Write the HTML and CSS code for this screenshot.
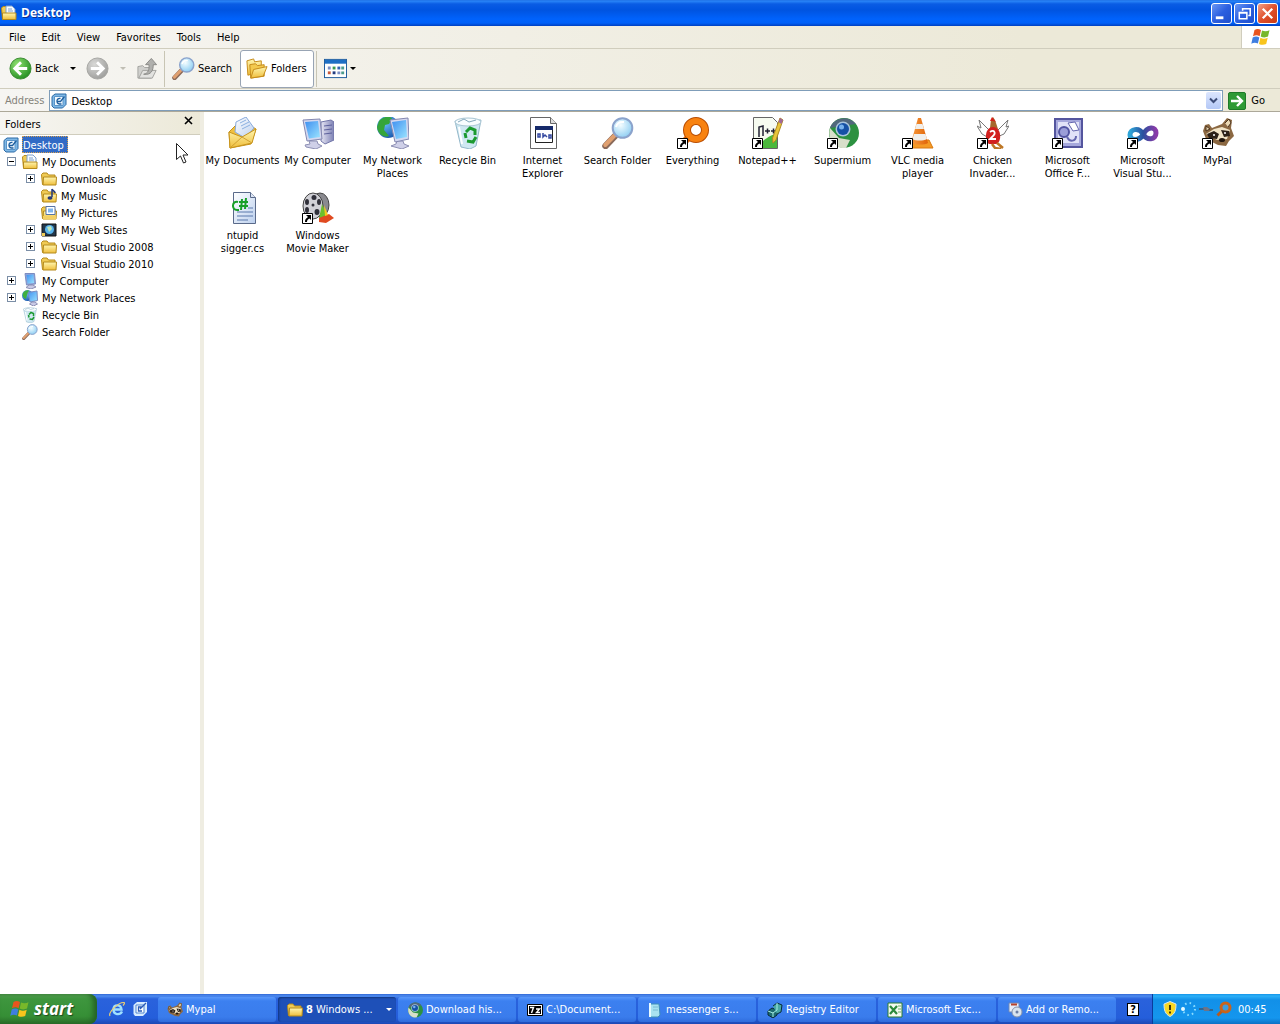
FILE: index.html
```html
<!DOCTYPE html>
<html lang="en">
<head>
    <meta charset="UTF-8">
    <meta name="viewport" content="width=device-width, initial-scale=1.0">
    <title>Desktop</title>
    <link rel="stylesheet" href="styles.css">
</head>
<body>
    <!-- shared icons -->
    <svg class="sprite" aria-hidden="true">
        <defs>
            <linearGradient id="g-folder" x1="0" y1="0" x2="0" y2="1"><stop offset="0" stop-color="#fff6b0"/><stop offset="1" stop-color="#efbe3c"/></linearGradient>
            <linearGradient id="g-screen" x1="0" y1="0" x2="1" y2="1"><stop offset="0" stop-color="#3f8ff0"/><stop offset="1" stop-color="#9be4ff"/></linearGradient>
            <linearGradient id="g-case" x1="0" y1="0" x2="1" y2="0"><stop offset="0" stop-color="#e6e6f4"/><stop offset="1" stop-color="#7c80b4"/></linearGradient>
            <linearGradient id="g-paper" x1="0" y1="0" x2="1" y2="1"><stop offset="0" stop-color="#ffffff"/><stop offset="1" stop-color="#bcd0ee"/></linearGradient>
            <linearGradient id="g-loop" x1="0" y1="0" x2="1" y2="0"><stop offset="0" stop-color="#2fa5d8"/><stop offset=".5" stop-color="#2b4f9e"/><stop offset="1" stop-color="#8a3aa8"/></linearGradient>
            <linearGradient id="g-cone" x1="0" y1="0" x2="1" y2="0"><stop offset="0" stop-color="#f89a3c"/><stop offset="1" stop-color="#e06408"/></linearGradient>
            <radialGradient id="g-green" cx=".35" cy=".3" r=".8"><stop offset="0" stop-color="#8fe070"/><stop offset="1" stop-color="#1d8a1d"/></radialGradient>
            <radialGradient id="g-gray" cx=".35" cy=".3" r=".8"><stop offset="0" stop-color="#d8d8d6"/><stop offset="1" stop-color="#9a9a98"/></radialGradient>
            <radialGradient id="g-lens" cx=".4" cy=".35" r=".7"><stop offset="0" stop-color="#f4fdff"/><stop offset="1" stop-color="#8accf2"/></radialGradient>
            <radialGradient id="g-globe" cx=".35" cy=".3" r=".8"><stop offset="0" stop-color="#6bc4ff"/><stop offset="1" stop-color="#1450a8"/></radialGradient>
        </defs>

        <symbol id="flag" viewBox="0 0 20 18">
            <path d="M3.500 2C6 .3 8 .8 10 2L8.600 8.200C6.500 7 4.500 7 2 8.300z" fill="#e8541e"/>
            <path d="M11 2.500C13.500 3.600 16 3.500 18.500 2.300L17 8.600C14.500 9.800 12 9.600 9.700 8.500z" fill="#78b82a"/>
            <path d="M1.700 9.500C4 8.200 6.200 8.200 8.300 9.400L6.900 15.600C4.800 14.500 2.700 14.500.3 15.700z" fill="#3f7ee0"/>
            <path d="M9.400 9.800C11.700 11 14.200 11 16.700 9.800L15.200 16C12.700 17.200 10.300 17 8 15.900z" fill="#f8c41c"/>
        </symbol>
        <symbol id="arrow-left" viewBox="0 0 24 24">
            <circle cx="12" cy="12" r="11" fill="url(#g-green)" stroke="#3a8a30"/>
            <path d="M12.500 5.500 6 12l6.500 6.500M6.500 12H19" fill="none" stroke="#fff" stroke-width="3"/>
        </symbol>
        <symbol id="arrow-right" viewBox="0 0 24 24">
            <circle cx="12" cy="12" r="11" fill="url(#g-gray)" stroke="#a5a5a2"/>
            <path d="M11.500 5.500 18 12l-6.500 6.500M17.500 12H5" fill="none" stroke="#fff" stroke-width="3"/>
        </symbol>
        <symbol id="folder-up" viewBox="0 0 24 24">
            <path d="M2 10l5-1 2 2h7v11H2z" fill="#d0d0cd" stroke="#a2a29f"/>
            <path d="M3 22l4-8h14l-4 8z" fill="#e2e2df" stroke="#a2a29f"/>
            <path d="M8 18c5-1 6-5 5.500-10H10l6-6.500L21.500 8H18c0 6-2 11-10 10z" fill="#b0b0ad" stroke="#8a8a87"/>
        </symbol>
        <symbol id="search" viewBox="0 0 32 32">
            <path d="M13 19 3.500 29" stroke="#8a6a5a" stroke-width="6.500" stroke-linecap="round"/>
            <path d="M12.500 18.500 3.300 28" stroke="#e0a070" stroke-width="4" stroke-linecap="round"/>
            <circle cx="20.500" cy="11" r="9.800" fill="url(#g-lens)" stroke="#8ba3cc" stroke-width="2"/>
            <path d="M14 10c1-4 4-5.500 8-5" fill="none" stroke="#fff" stroke-width="2"/>
        </symbol>
        <symbol id="folders" viewBox="0 0 24 24">
            <path d="M2 4l7-2 1 3 7-1v11L3 19z" fill="url(#g-folder)" stroke="#c48a18"/>
            <path d="M5 8l6-1 2 2 7-1v12L6 22z" fill="#f3c94e" stroke="#c48a18"/>
            <path d="M6 22l3-9 14-3-4 10z" fill="url(#g-folder)" stroke="#c48a18"/>
        </symbol>
        <symbol id="views" viewBox="0 0 24 20">
            <rect x=".5" y=".5" width="23" height="19" fill="#fff" stroke="#1c5a9c"/>
            <path d="M1 1h22v4H1z" fill="#1e6fc4"/>
            <path d="M4 8h3v3H4zM14 13h3v3h-3z" fill="#7a8ec4"/><path d="M9 8h3v3H9z" fill="#3a9a50"/>
            <path d="M14 8h3v3h-3z" fill="#2f62b0"/><path d="M4 13h3v3H4z" fill="#c85a3c"/>
            <path d="M9 13h3v3H9z" fill="#223c80"/><path d="M18 8h3v3h-3zM18 13h3v3h-3z" fill="#4c9c8c"/>
        </symbol>
        <symbol id="go" viewBox="0 0 18 18">
            <rect x=".5" y=".5" width="17" height="17" rx="1.500" fill="#2f9a35" stroke="#1f7a28"/>
            <path d="M9 4l5 5-5 5M13.500 9H3" fill="none" stroke="#fff" stroke-width="2.400"/>
        </symbol>
        <symbol id="desktop" viewBox="0 0 16 16">
            <path d="M1 3.500 4 1h11v10.500L11.500 15H3l-2-2z" fill="#7fb8e6" stroke="#2d6aa6"/>
            <path d="M3.500 3.500h8.500v9H3.500z" fill="#f2f9ff" stroke="#5a94c8"/>
            <path d="M9.500 5.500c-4-1-5 5-1 5.500h2M6.500 8.500h3l4-5" fill="none" stroke="#1f5f9e" stroke-width="1.300"/>
        </symbol>
        <symbol id="show-desktop" viewBox="0 0 16 16">
            <path d="M1.500 4 5 1h10v10l-4 4H3l-1.500-2z" fill="#d8ecff"/>
            <path d="M4 4h8v8H4z" fill="#fff" stroke="#4c84d0"/><path d="M10 6H6.500v4H10M8 8l6-6" fill="none" stroke="#2a5cb8" stroke-width="1.300"/>
        </symbol>
        <symbol id="folder" viewBox="0 0 16 16">
            <path d="M.5 3.500 2 2h4l1.500 2H14v9.500H1.500z" fill="#f0cb55" stroke="#b58a1c"/>
            <path d="M2.500 6h13l-.5 8H2z" fill="url(#g-folder)" stroke="#b58a1c"/>
        </symbol>
        <symbol id="folder-docs" viewBox="0 0 16 16">
            <path d="M.5 3 2 1.500h3L6.500 3V14h-5z" fill="#f0cb55" stroke="#b58a1c"/>
            <path d="M5 1h6l3 3v8H5z" fill="#f7fbff" stroke="#7fa0cc"/><path d="M7 4h4M7 6h5" stroke="#7fa0cc"/>
            <path d="M1.500 8h13.500v6.500H1.500z" fill="url(#g-folder)" stroke="#b58a1c"/>
        </symbol>
        <symbol id="folder-music" viewBox="0 0 16 16">
            <use href="#folder"/><path d="M11 1v8M11 1c1 2 3 2 3 4" fill="none" stroke="#24387a" stroke-width="1.500"/><ellipse cx="9" cy="10" rx="2.500" ry="1.800" fill="#24387a"/>
        </symbol>
        <symbol id="folder-pics" viewBox="0 0 16 16">
            <use href="#folder"/><path d="M5 1.500h9v8H5z" fill="#fff" stroke="#5573a8"/><path d="M7 3.500h5v4H7z" fill="#7fb6ee"/><path d="M2 11h13v3.500H2z" fill="#f3d064"/>
        </symbol>
        <symbol id="folder-web" viewBox="0 0 16 16">
            <path d="M1 2h14v12H1z" fill="#22384c" stroke="#111"/><circle cx="8.500" cy="7.500" r="4.500" fill="#58b4ee"/><path d="M6 5l4-1 1 3-3 3z" fill="#bfe6b8"/><path d="M1 11h3v3H1z" fill="#f0cb55"/>
        </symbol>
        <symbol id="computer-small" viewBox="0 0 16 16">
            <path d="M3 .5 12.500.500 13.500 11 4.500 12z" fill="#8fa4d8" stroke="#7c8cc0"/>
            <path d="M4.500 2l7-.5.500 8.500-6.500.5z" fill="url(#g-screen)"/>
            <path d="M7 12h4l3 2-5 2-5-1.500z" fill="#c8cae6" stroke="#8e90b4"/>
        </symbol>
        <symbol id="network-small" viewBox="0 0 16 16">
            <circle cx="5.500" cy="5.500" r="5.500" fill="url(#g-globe)"/><path d="M1 3c2-3 4-3 6-2.500L5 5 4 9C1 8 0 6 1 3z" fill="#3faf3f"/>
            <path d="M6 2.500 15 1l.5 9.500-7.500 1.500z" fill="url(#g-screen)" stroke="#7c8cc0"/>
            <path d="M10 12h3l2.500 2-4 2-4-2z" fill="#c8cae6" stroke="#8e90b4"/>
        </symbol>
        <symbol id="envelope" viewBox="0 0 32 32">
            <path d="M2 15 14 3l15 9-5 15L3 31z" fill="#f0c040" stroke="#c8941c"/>
            <path d="M9 5 19 0l8 11-9 10L8 15z" fill="url(#g-paper)" stroke="#88aadc"/>
            <path d="M13 6l6-3M14 9l8-4M15 12l8-4" stroke="#8ab0e0"/>
            <path d="M2 15l13 5L29 12l-4 14L3 31z" fill="url(#g-folder)" stroke="#c8941c"/>
            <path d="M3 31l12-11 10 6" fill="none" stroke="#d0a030"/>
        </symbol>
        <symbol id="computer" viewBox="0 0 32 32">
            <path d="M19 5l10-2 3 2v18l-9 4-4-3z" fill="url(#g-case)" stroke="#7276a8"/>
            <path d="M22 9l8-1M22 13l8-1M22 17l8-1" stroke="#5c609c"/>
            <path d="M7 24h8l1 3 4 2-6 3-10-2-1-2 5-1z" fill="#cfd0e8" stroke="#8e90b4"/>
            <path d="M1 3l17-1 2 20-15 2z" fill="#d4d8f0" stroke="#8488b0"/>
            <path d="M3 5l13-1 2 16-11 1.500z" fill="url(#g-screen)"/>
        </symbol>
        <symbol id="network" viewBox="0 0 32 32">
            <circle cx="11" cy="10" r="11" fill="url(#g-globe)"/>
            <path d="M2 4c5-5 10-5 13-3l-3 6-4 1-1 5 5 6C6 21 1 17 0 10z" fill="#35a53a"/>
            <path d="M20 24h6l1 3 5 2-7 3-11-3 5-2z" fill="#cfd0e8" stroke="#8e90b4"/>
            <path d="M13 3l18-2 1 21-14 3z" fill="#d4d8f0" stroke="#8488b0"/>
            <path d="M15 5l14-2 1 17-11 2z" fill="url(#g-screen)"/>
        </symbol>
        <symbol id="recycle" viewBox="0 0 32 32">
            <path d="M3 4l26-1-5 26-6 3-9-2z" fill="#cfe8f2" stroke="#94b8ca"/>
            <ellipse cx="16" cy="5" rx="13" ry="4" fill="#f8fdff" stroke="#a9c6d4"/>
            <path d="M6 5l6-3 5 3 7-2" fill="none" stroke="#84a8bc"/>
            <path d="M14 15l4-4 5 2v5M24 20l-3 5-6-1M14 21l-1-5" fill="none" stroke="#1c9a30" stroke-width="3"/>
            <path d="M7 10l3 17" stroke="#fff" stroke-width="2"/>
        </symbol>
        <symbol id="htmlfile" viewBox="0 0 32 32">
            <path d="M3.500.5h20l6 6v25h-26z" fill="#fff" stroke="#666"/><path d="M23.500.5v6h6" fill="#ddd" stroke="#666"/>
            <path d="M8.500 9.500h17v16h-17z" fill="#fff" stroke="#222"/><path d="M8 9h18v4H8z" fill="#162a6a"/>
            <path d="M11 17h2v3h-2zM16 16v4l2-2 2 2M22 18h2v3h-2z" fill="none" stroke="#3448a0" stroke-width="1.500"/>
        </symbol>
        <symbol id="everything" viewBox="0 0 32 32">
            <path d="M12 20 5 27" stroke="#e86c08" stroke-width="7"/>
            <circle cx="19" cy="13" r="9" fill="#fff" stroke="#b84c00" stroke-width="8"/>
            <circle cx="19" cy="13" r="9" fill="none" stroke="#f88210" stroke-width="6"/>
        </symbol>
        <symbol id="notepad" viewBox="0 0 32 32">
            <path d="M1.500.5h19l5 5v26h-24z" fill="#f6fbf0" stroke="#666"/>
            <path d="M2 26c9 2 12-8 23-9v14H2z" fill="#4bb83c"/>
            <path d="M7 20V10l4-1v10M13 14h5m-2.500-2.500v5M19 14h5m-2.500-2.500v5" fill="none" stroke="#223" stroke-width="1.500"/>
            <path d="M28 1l3 2-7 20-3 3-.5-5z" fill="#e8c53c" stroke="#b08a20"/><path d="M28 1l3 2-1.500 4-3-2z" fill="#a06898"/>
        </symbol>
        <symbol id="supermium" viewBox="0 0 32 32">
            <circle cx="17" cy="16" r="15" fill="#2c9140"/>
            <path d="M3 11C6 1 21-3 29 7L15 9z" fill="#51687c"/>
            <path d="M3 11l9 10 11 2-4 8C7 32 0 22 3 11z" fill="#d8dfca"/>
            <circle cx="16" cy="12" r="7.500" fill="#a9c4dc"/><circle cx="16" cy="12" r="6" fill="#1551a5"/><circle cx="14.500" cy="10" r="2.500" fill="#77b2ed"/>
        </symbol>
        <symbol id="vlc" viewBox="0 0 32 32">
            <path d="M6 23h21l4 8H3z" fill="#f59a24" stroke="#d87810"/>
            <path d="M16 1h3l7 25c-3 2-13 2-17 0z" fill="url(#g-cone)"/>
            <path d="M14.500 7h6l1.500 5h-9zM12 17h11.500l1.500 5c-4 2-11 2-14.500 0z" fill="#f0efec"/>
        </symbol>
        <symbol id="chicken" viewBox="0 0 32 32">
            <path d="M13 14 2 3l2 8-4-2 5 8 7 4M20 14 31 3l-2 7 3-1-5 8-7 3" fill="#fff" stroke="#777"/>
            <path d="M13 11l1-8 2-3 2 3 3 9z" fill="#a6682c"/><path d="M13 4l2-4 4 5-3-1z" fill="#d4201a"/>
            <path d="M16 10c9 0 9 16 3 17h-7c-5-4-4-17 4-17z" fill="#d2201e"/>
            <path d="M13 15c4-3 7 1 2 5l-2 2h6" fill="none" stroke="#fff" stroke-width="1.800"/>
            <path d="M15 27l3 4 6 1M20 26l6 5" fill="none" stroke="#bd7624" stroke-width="2.500"/>
        </symbol>
        <symbol id="office" viewBox="0 0 32 32">
            <path d="M3 2h27v28H3z" fill="#a6a8dc" stroke="#54559e" stroke-width="2"/><path d="M6 5h21v21H6z" fill="#e1e2f8"/>
            <path d="M16 6l7-1 4 8-6 1z" fill="#fff" stroke="#6466ae"/><circle cx="12" cy="15" r="5" fill="#9a9dd8" stroke="#5254a2" stroke-width="2"/>
            <path d="M15 20c3 6 9 4 9-1" fill="none" stroke="#6466ae" stroke-width="2"/>
        </symbol>
        <symbol id="vstudio" viewBox="0 0 32 32">
            <path d="M16 18c-4 6-13 6-13 0s9-8 13-1 13 6 13-1-9-7-13 2z" fill="none" stroke="url(#g-loop)" stroke-width="5"/>
        </symbol>
        <symbol id="mypal" viewBox="0 0 32 32">
            <path d="M3 8l4-1 3 4 10-4 5-6 5 2-1 8 3 8-5 5-3 5-8-1L4 22 1 14z" fill="#8b6842"/>
            <path d="M23 6l4-4 2 4-3 4M4 9l4 3-4 2z" fill="#ead8b4" stroke="#4b321c"/>
            <path d="M4 17l8-5 8-2 8 3-3 9-10 1z" fill="#f2e5c8"/>
            <path d="M5 17l7-3 5 3-2 5-8-1zM19 13l8 1 1 5-6 1z" fill="#2c2118"/>
            <circle cx="12" cy="18" r="1" fill="#fff"/><circle cx="23" cy="16" r="1" fill="#fff"/><ellipse cx="20" cy="23" rx="3" ry="2" fill="#20160e"/>
        </symbol>
        <symbol id="csfile" viewBox="0 0 32 32">
            <path d="M6.500.5h17l5 5v26h-22z" fill="url(#g-paper)" stroke="#5a6a8a"/><path d="M23.500.5v5h5" fill="#dde6f5" stroke="#5a6a8a"/>
            <path d="M10 20h16M10 24h16M10 28h11M21 16h5" stroke="#5a78ac"/>
            <path d="M11 10c-6-2-7 8-1 8h2M15 7l-1 11M19 6l-1 11M12 10h9M12 14h9" fill="none" stroke="#18a028" stroke-width="2"/>
        </symbol>
        <symbol id="movie" viewBox="0 0 32 32">
            <ellipse cx="18" cy="13" rx="9" ry="12" fill="#8a8a90" stroke="#444"/>
            <ellipse cx="11" cy="14" rx="10" ry="13" fill="#d0d0d6" stroke="#444"/>
            <g fill="#30303a"><ellipse cx="12" cy="5.500" rx="2.500" ry="2.500"/><ellipse cx="5" cy="10" rx="2" ry="3"/><ellipse cx="17" cy="10" rx="2" ry="3"/><ellipse cx="5" cy="18" rx="2" ry="3"/><ellipse cx="15" cy="20" rx="2.500" ry="3"/><circle cx="11" cy="13" r="1.500"/></g>
            <path d="M20 12l5 12-8 3z" fill="#6cbf2c"/><path d="M17 26l10-4 5 4-8 5-7-1z" fill="#e04a20"/><path d="M22 13l4 10-3 1z" fill="#f6c81c"/>
        </symbol>
        <symbol id="shortcut" viewBox="0 0 11 11">
            <path d="M.5.500h10v10H.5z" fill="#fff" stroke="#000"/><path d="M4 2h5v5L7.500 5.500C5.500 6.500 5 7.500 5 9H3c0-2 .5-3.500 3-5z" fill="#000"/>
        </symbol>
        <symbol id="ie" viewBox="0 0 16 16">
            <path d="M13 10.500C11 14.500 4.500 14 4.500 8.500S12 3 12.500 8.500H5" fill="none" stroke="#9fe0ff" stroke-width="2.400"/>
            <path d="M1 15C-1 12 9 1 15 1.500c1 .5 0 2-1 3" fill="none" stroke="#f0d070" stroke-width="1.200"/>
        </symbol>
        <symbol id="sevenzip" viewBox="0 0 16 12">
            <path d="M.5.500h15v11H.5z" fill="#fff" stroke="#000"/><path d="M2 2h12v8H2z" fill="#000"/><path d="M3 3.500h3.500L4.500 9M9 5h3.500L9.500 8.500H13" fill="none" stroke="#fff" stroke-width="1.400"/>
        </symbol>
        <symbol id="note" viewBox="0 0 16 16">
            <path d="M3 2h9l1 11-2 2H3z" fill="#a9e2f0" stroke="#3f8fb8"/><path d="M3 1v14" stroke="#e8faff" stroke-width="2"/><path d="M6 5h5M6 8h5" stroke="#78bcd4"/>
        </symbol>
        <symbol id="regedit" viewBox="0 0 16 16">
            <path d="M1 9l4-3 5 2v5l-4 3-5-3z" fill="#1d6b70" stroke="#062a38"/><path d="M6 4l4-3 5 2-1 7-4 2" fill="#48a8a4" stroke="#062a38"/><path d="M1 9l5 2 4-3M6 11v4M10 1v7" stroke="#a6eee4" fill="none"/>
        </symbol>
        <symbol id="excel" viewBox="0 0 16 16">
            <path d="M1 1h14v14H1z" fill="#f3faef" stroke="#2a7a35"/><path d="M3 4l7 8M10 4l-7 8" stroke="#2d8a3c" stroke-width="2.200"/><path d="M11 4h3M11 7h3M11 10h3" stroke="#6cad66"/>
        </symbol>
        <symbol id="addremove" viewBox="0 0 16 16">
            <path d="M2 1h10v9H2z" fill="#e8eef8" stroke="#6d87b8"/><path d="M4 2.500h6" stroke="#b8442c" stroke-width="2"/><circle cx="10" cy="10" r="5" fill="#d9e4ee" stroke="#8794ac"/><circle cx="10" cy="10" r="1.500" fill="#6b7ea4"/>
        </symbol>
        <symbol id="shield" viewBox="0 0 14 16">
            <path d="M7 .5l6 2.500c0 6-1 10-6 12.500C2 13 1 9 1 3z" fill="#f8d823" stroke="#d8e8f0"/><path d="M7 4v5M7 10.500v2" stroke="#403808" stroke-width="2"/>
        </symbol>
        <symbol id="spinner" viewBox="0 0 16 16">
            <circle cx="9" cy="8" r="6" fill="none" stroke="#8adcff" stroke-width="2" stroke-dasharray="1.500 3.200"/><circle cx="3" cy="8" r="2" fill="#e6faff"/>
        </symbol>
        <symbol id="plug" viewBox="0 0 16 16">
            <path d="M1 8h5M10 9h5" stroke="#3a5878" stroke-width="1.500"/><path d="M5 6h4l3 2-1 2H6z" fill="#6c7488"/>
        </symbol>
        <symbol id="magnifier" viewBox="0 0 16 16">
            <path d="M6 10 1.500 14.500" stroke="#b85a1c" stroke-width="3"/><circle cx="9.500" cy="6.500" r="4.500" fill="#3c9ce0" stroke="#c8641c" stroke-width="3"/>
        </symbol>
    </svg>

    <header class="titlebar">
        <svg class="icon16"><use href="#folder-docs"/></svg>
        <h1>Desktop</h1>
        <button class="win-btn" aria-label="Minimize"><svg viewBox="0 0 20 20"><path d="M4 13h8v3H4z" fill="#fff"/></svg></button>
        <button class="win-btn" aria-label="Restore"><svg viewBox="0 0 20 20"><path d="M8 7V5h8v7h-2M4.500 9h8v6.500h-8zM4 9.500h9M7.500 5h9" fill="none" stroke="#fff" stroke-width="1.600"/></svg></button>
        <button class="win-btn close" aria-label="Close"><svg viewBox="0 0 20 20"><path d="M5 5l10 10M15 5L5 15" stroke="#fff" stroke-width="2.400"/></svg></button>
    </header>

    <nav class="menubar">
        <button>File</button>
        <button>Edit</button>
        <button>View</button>
        <button>Favorites</button>
        <button>Tools</button>
        <button>Help</button>
        <span class="throbber"><svg><use href="#flag"/></svg></span>
    </nav>

    <div class="toolbar">
        <button class="tool"><svg><use href="#arrow-left"/></svg>Back</button>
        <button class="drop" aria-label="Back history"><span class="caret"></span></button>
        <button class="tool" aria-label="Forward" disabled><svg><use href="#arrow-right"/></svg></button>
        <button class="drop" aria-label="Forward history" disabled><span class="caret"></span></button>
        <button class="tool" aria-label="Up" disabled><svg><use href="#folder-up"/></svg></button>
        <span class="sep"></span>
        <button class="tool"><svg><use href="#search"/></svg>Search</button>
        <button class="tool pressed"><svg><use href="#folders"/></svg>Folders</button>
        <span class="sep"></span>
        <button class="tool" aria-label="Views"><svg><use href="#views"/></svg><span class="caret"></span></button>
    </div>

    <form class="addressbar">
        <label for="address">Address</label>
        <div class="address-box">
            <svg class="icon16"><use href="#desktop"/></svg>
            <input type="text" id="address" value="Desktop">
            <button type="button" aria-label="Show addresses"><svg viewBox="0 0 9 7"><path d="M1 1.500l3.500 3.500L8 1.500" fill="none" stroke="#3c4c78" stroke-width="2"/></svg></button>
        </div>
        <button type="button" class="go"><svg><use href="#go"/></svg>Go</button>
    </form>

    <main>
        <aside>
            <div class="pane-head">
                <h2>Folders</h2>
                <button aria-label="Close folders"><svg viewBox="0 0 9 9"><path d="M1 1l7 7M8 1L1 8" stroke="#000" stroke-width="1.600"/></svg></button>
            </div>
            <ul class="tree">
                <li>
                    <a href="#" class="selected"><svg class="icon16"><use href="#desktop"/></svg><span>Desktop</span></a>
                    <ul>
                        <li>
                            <button class="toggle open" aria-label="Collapse"></button>
                            <a href="#"><svg class="icon16"><use href="#folder-docs"/></svg><span>My Documents</span></a>
                            <ul>
                                <li><button class="toggle" aria-label="Expand"></button><a href="#"><svg class="icon16"><use href="#folder"/></svg><span>Downloads</span></a></li>
                                <li><a href="#"><svg class="icon16"><use href="#folder-music"/></svg><span>My Music</span></a></li>
                                <li><a href="#"><svg class="icon16"><use href="#folder-pics"/></svg><span>My Pictures</span></a></li>
                                <li><button class="toggle" aria-label="Expand"></button><a href="#"><svg class="icon16"><use href="#folder-web"/></svg><span>My Web Sites</span></a></li>
                                <li><button class="toggle" aria-label="Expand"></button><a href="#"><svg class="icon16"><use href="#folder"/></svg><span>Visual Studio 2008</span></a></li>
                                <li><button class="toggle" aria-label="Expand"></button><a href="#"><svg class="icon16"><use href="#folder"/></svg><span>Visual Studio 2010</span></a></li>
                            </ul>
                        </li>
                        <li><button class="toggle" aria-label="Expand"></button><a href="#"><svg class="icon16"><use href="#computer-small"/></svg><span>My Computer</span></a></li>
                        <li><button class="toggle" aria-label="Expand"></button><a href="#"><svg class="icon16"><use href="#network-small"/></svg><span>My Network Places</span></a></li>
                        <li><a href="#"><svg class="icon16"><use href="#recycle"/></svg><span>Recycle Bin</span></a></li>
                        <li><a href="#"><svg class="icon16"><use href="#search"/></svg><span>Search Folder</span></a></li>
                    </ul>
                </li>
            </ul>
        </aside>

        <section class="files">
            <a href="#"><svg><use href="#envelope"/></svg>My Documents</a>
            <a href="#"><svg><use href="#computer"/></svg>My Computer</a>
            <a href="#"><svg><use href="#network"/></svg>My Network<br>Places</a>
            <a href="#"><svg><use href="#recycle"/></svg>Recycle Bin</a>
            <a href="#"><svg><use href="#htmlfile"/></svg>Internet<br>Explorer</a>
            <a href="#"><svg><use href="#search"/></svg>Search Folder</a>
            <a href="#"><svg><use href="#everything"/><use href="#shortcut" y="21" width="11" height="11"/></svg>Everything</a>
            <a href="#"><svg><use href="#notepad"/><use href="#shortcut" y="21" width="11" height="11"/></svg>Notepad++</a>
            <a href="#"><svg><use href="#supermium"/><use href="#shortcut" y="21" width="11" height="11"/></svg>Supermium</a>
            <a href="#"><svg><use href="#vlc"/><use href="#shortcut" y="21" width="11" height="11"/></svg>VLC media<br>player</a>
            <a href="#"><svg><use href="#chicken"/><use href="#shortcut" y="21" width="11" height="11"/></svg>Chicken<br>Invader...</a>
            <a href="#"><svg><use href="#office"/><use href="#shortcut" y="21" width="11" height="11"/></svg>Microsoft<br>Office F...</a>
            <a href="#"><svg><use href="#vstudio"/><use href="#shortcut" y="21" width="11" height="11"/></svg>Microsoft<br>Visual Stu...</a>
            <a href="#"><svg><use href="#mypal"/><use href="#shortcut" y="21" width="11" height="11"/></svg>MyPal</a>
            <a href="#"><svg><use href="#csfile"/></svg>ntupid<br>sigger.cs</a>
            <a href="#"><svg><use href="#movie"/><use href="#shortcut" y="21" width="11" height="11"/></svg>Windows<br>Movie Maker</a>
        </section>
    </main>

    <footer class="taskbar">
        <button class="start"><svg><use href="#flag"/></svg>start</button>
        <div class="quick">
            <button aria-label="Internet Explorer"><svg class="icon16"><use href="#ie"/></svg></button>
            <button aria-label="Show Desktop"><svg class="icon16"><use href="#show-desktop"/></svg></button>
        </div>
        <div class="tasks">
            <button><svg class="icon16"><use href="#mypal"/></svg>Mypal</button>
            <button class="active"><svg class="icon16"><use href="#folder"/></svg><b>8</b> Windows ...<span class="caret"></span></button>
            <button><svg class="icon16"><use href="#supermium"/></svg>Download his...</button>
            <button><svg class="icon16"><use href="#sevenzip"/></svg>C:\Document...</button>
            <button><svg class="icon16"><use href="#note"/></svg>messenger s...</button>
            <button><svg class="icon16"><use href="#regedit"/></svg>Registry Editor</button>
            <button><svg class="icon16"><use href="#excel"/></svg>Microsoft Exc...</button>
            <button><svg class="icon16"><use href="#addremove"/></svg>Add or Remo...</button>
        </div>
        <button class="help">?</button>
        <div class="tray">
            <svg class="icon16"><use href="#shield"/></svg>
            <svg class="icon16"><use href="#spinner"/></svg>
            <svg class="icon16"><use href="#plug"/></svg>
            <svg class="icon16"><use href="#magnifier"/></svg>
            <time>00:45</time>
        </div>
    </footer>

    <svg class="cursor" viewBox="0 0 12 21"><path d="M.5.500v16l4-3.500 3 7 2.500-1-3-7h5z" fill="#fff" stroke="#222"/></svg>
</body>
</html>
```
FILE: styles.css
```css
* {
    box-sizing: border-box;
}
body {
    margin: 0;
    height: 100vh;
    display: flex;
    flex-direction: column;
    overflow: hidden;
    background: #fff;
    color: #000;
    font: 11px/13px Tahoma, "DejaVu Sans Condensed", "Noto Sans", sans-serif;
}
button, input {
    font: inherit;
    color: inherit;
    border: 0;
    padding: 0;
    margin: 0;
    background: none;
}
h1, h2, ul {
    margin: 0;
    padding: 0;
}
a {
    color: inherit;
    text-decoration: none;
}
svg {
    display: block;
    flex: none;
}
.sprite {
    position: absolute;
    width: 0;
    height: 0;
}
.icon16 {
    width: 16px;
    height: 16px;
}
.caret {
    border: 3px solid transparent;
    border-top-color: #000;
    border-bottom: 0;
}

/* title bar */
.titlebar {
    display: flex;
    align-items: center;
    height: 26px;
    flex: none;
    padding: 0 2px 0 1px;
    gap: 2px;
    background: linear-gradient(#1c6ae0 0, #2a86f8 1px, #0a5ce4 4px, #0054e0 10px, #0062fc 19px, #0060f8 23px, #0040c0 26px);
}
.titlebar h1 {
    flex: 1;
    padding-left: 2px;
    color: #fff;
    font: bold 12px/16px "Trebuchet MS", "Open Sans", sans-serif;
    text-shadow: 1px 1px #0a2f90;
}
.win-btn {
    width: 21px;
    height: 21px;
    border: 1px solid #fff;
    border-radius: 3px;
    background: linear-gradient(135deg, #6a97f4, #2b5fe0 50%, #1f4fcc);
}
.win-btn.close {
    background: linear-gradient(135deg, #f0a088, #e0502c 50%, #c83a14);
}

/* menu */
.menubar {
    display: flex;
    height: 23px;
    flex: none;
    padding-left: 1px;
    border-bottom: 1px solid #d0cdbd;
    background: linear-gradient(90deg, #f6f5f2, #ece9d8 80%);
}
.menubar button {
    padding: 0 8px;
}
.throbber {
    width: 39px;
    margin-left: auto;
    padding: 2px 9px;
    border-left: 1px solid #d0cdbd;
    background: #fff;
}
.throbber svg {
    width: 20px;
    height: 18px;
}

/* toolbar */
.toolbar {
    display: flex;
    align-items: center;
    height: 40px;
    flex: none;
    padding-left: 4px;
    border-bottom: 1px solid #d0cdbd;
    background: linear-gradient(90deg, #f6f5f2, #ece9d8 80%);
}
.tool {
    display: flex;
    align-items: center;
    gap: 3px;
    height: 38px;
    padding: 0 4px;
    border: 1px solid transparent;
    border-radius: 3px;
}
.tool svg {
    width: 23px;
    height: 23px;
}
.pressed {
    margin: 0 2px 0 3px;
    padding-right: 6px;
    border-color: #98a4b4;
    background: #fff;
}
.drop {
    display: grid;
    place-items: center;
    width: 17px;
    height: 38px;
}
.drop:disabled .caret {
    border-top-color: #c0beb4;
}
.sep {
    width: 1px;
    height: 36px;
    margin-right: 2px;
    background: #c8c5b4;
}

/* address */
.addressbar {
    display: flex;
    align-items: center;
    height: 23px;
    flex: none;
    padding: 1px 4px 0 5px;
    gap: 5px;
    border-bottom: 1px solid #aca899;
    background: linear-gradient(90deg, #f6f5f2, #ece9d8 80%);
}
.addressbar label {
    color: #85837a;
}
.address-box {
    display: flex;
    align-items: center;
    flex: 1;
    height: 21px;
    padding: 0 1px;
    border: 1px solid #7f9db9;
    background: #fff;
}
.address-box input {
    flex: 1;
    min-width: 0;
    padding: 2px 0 0 4px;
    outline: 0;
}
.address-box button {
    display: grid;
    place-items: center;
    width: 15px;
    height: 17px;
    border-radius: 2px;
    background: linear-gradient(#dce6fe, #b4c8f6);
}
.address-box button svg {
    width: 9px;
    height: 7px;
}
.go {
    display: flex;
    align-items: center;
    gap: 5px;
    padding-right: 11px;
}
.go svg {
    width: 18px;
    height: 18px;
}

/* folder tree */
main {
    display: flex;
    flex: 1;
    min-height: 0;
}
aside {
    width: 204px;
    border-right: 4px solid #efede2;
}
.pane-head {
    display: flex;
    align-items: center;
    justify-content: space-between;
    height: 23px;
    padding: 1px 7px 0 5px;
    border-bottom: 1px solid #d0cdbd;
    background: linear-gradient(90deg, #f6f5f2, #ece9d8);
}
.pane-head h2 {
    padding-top: 2px;
    font-size: 11px;
    font-weight: normal;
}
.pane-head button {
    padding-bottom: 6px;
}
.pane-head svg {
    width: 9px;
    height: 9px;
}
.tree {
    padding: 1px 0 0 3px;
}
.tree ul {
    padding-left: 19px;
}
.tree li {
    position: relative;
    list-style: none;
}
.tree a {
    display: flex;
    align-items: center;
    height: 17px;
    gap: 3px;
    white-space: nowrap;
}
.tree a span {
    padding: 2px 1px 0;
    line-height: 15px;
}
.tree .selected span {
    background: #316ac5;
    color: #fff;
    outline: 1px dotted #d8a050;
    outline-offset: -1px;
    padding-right: 4px;
}
/* plus / minus box sits in the indent */
.toggle {
    position: absolute;
    left: -15px;
    top: 4px;
    width: 9px;
    height: 9px;
    border: 1px solid #7b8ea6;
    background: linear-gradient(#000, #000) center/5px 1px no-repeat, linear-gradient(#000, #000) center/1px 5px no-repeat, #fff;
}
.toggle.open {
    background: linear-gradient(#000, #000) center/5px 1px no-repeat, #fff;
}

/* icons view */
.files {
    flex: 1;
    display: grid;
    grid-template-columns: repeat(auto-fill, 75px);
    grid-auto-rows: 75px;
    align-content: start;
    padding: 5px 0 0 1px;
}
.files a {
    text-align: center;
    white-space: nowrap;
}
.files svg {
    width: 32px;
    height: 32px;
    margin: 0 auto 5px;
}

/* taskbar */
.taskbar {
    display: flex;
    height: 30px;
    flex: none;
    background: linear-gradient(#3168d5 0, #4e8cf0 2px, #2a62dc 5px, #245edb 24px, #1c48b4 30px);
    color: #fff;
}
.start {
    display: flex;
    align-items: center;
    gap: 4px;
    width: 97px;
    padding-left: 10px;
    border-radius: 0 8px 8px 0;
    background: linear-gradient(#5aa858 0, #3e963e 5px, #368f36 22px, #2a702a 30px);
    box-shadow: inset -4px 0 5px #256425;
    font: italic bold 17px/20px "Open Sans", sans-serif;
    text-shadow: 1px 1px 1px #1c4a1c;
}
.start svg {
    width: 20px;
    height: 18px;
}
.quick {
    display: flex;
    align-items: center;
    gap: 7px;
    width: 61px;
    padding-left: 12px;
}
.tasks {
    display: flex;
    flex: 1;
    min-width: 0;
    gap: 2px;
    padding: 3px 0 2px;
}
.tasks button {
    display: flex;
    align-items: center;
    gap: 3px;
    flex: 0 1 118px;
    min-width: 0;
    padding: 0 4px 0 9px;
    border-radius: 3px;
    background: linear-gradient(#5a98fa 0, #3c80f0 4px, #3a7cec 20px, #2f6cdc);
    white-space: nowrap;
}
.tasks .active {
    background: #1e50b8;
    box-shadow: inset 1px 1px 2px #123680;
}
.tasks .caret {
    margin-left: auto;
    border-top-color: #fff;
}
.help {
    width: 12px;
    height: 13px;
    margin: 9px 13px 0 10px;
    border: 1px solid #000;
    background: #fff;
    color: #000;
    font-weight: bold;
    line-height: 11px;
}
.tray {
    display: flex;
    align-items: center;
    gap: 2px;
    width: 128px;
    padding-left: 9px;
    border-left: 1px solid #0a3c9c;
    background: linear-gradient(#1494e8 0, #2cb0f8 2px, #1290e8 6px, #1496ee 24px, #0c70c4 30px);
}
.tray time {
    padding-left: 4px;
}

.cursor {
    position: absolute;
    left: 176px;
    top: 143px;
    width: 12px;
    height: 21px;
}
```
